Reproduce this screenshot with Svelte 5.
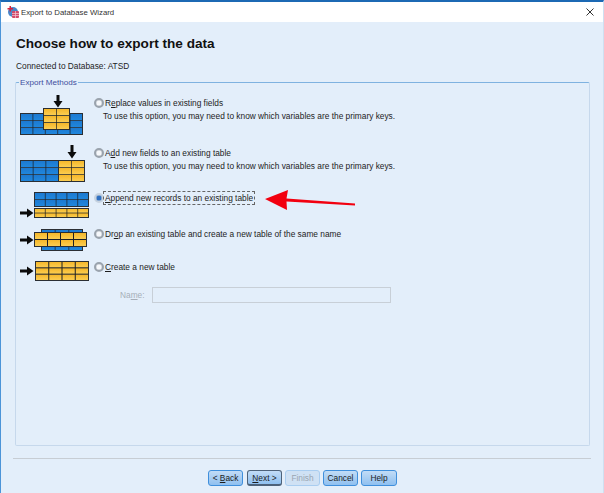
<script>
  const blue = 'url(#blueFill)';
  const gold = 'url(#goldFill)';
  const options = [
    { key: 'e', pre: 'R', post: 'place values in existing fields', desc: true, cls: 'r1', box: '20 95 72 50',
      tables: [{ x: 20.5, y: 113.5, w: 62, h: 21, c: 5, r: 3, f: blue }, { x: 43.5, y: 108.5, w: 26, h: 21, c: 2, r: 3, f: gold }],
      arrows: [{ d: 'v', x: 58, y: 94 }] },
    { key: 'd', pre: 'A', post: 'd new fields to an existing table', desc: true, cls: 'r2', box: '20 145 72 45',
      tables: [{ x: 20.5, y: 160.5, w: 38, h: 21, c: 3, r: 3, f: blue }, { x: 58.5, y: 160.5, w: 26, h: 21, c: 2, r: 3, f: gold }],
      arrows: [{ d: 'v', x: 72, y: 145 }] },
    { key: 'A', pre: '', post: 'ppend new records to an existing table', selected: true, cls: 'r3', box: '20 190 72 36',
      tables: [{ x: 34.5, y: 192.5, w: 54, h: 14, c: 5, r: 2, f: blue }, { x: 34.5, y: 208.5, w: 54, h: 9, c: 5, r: 2, f: gold }],
      arrows: [{ d: 'h', x: 20, y: 213 }] },
    { key: 'o', pre: 'Dr', post: 'p an existing table and create a new table of the same name', cls: 'r4', box: '20 226 72 33',
      tables: [{ x: 41.5, y: 229.5, w: 41, h: 21, c: 3, r: 3, f: blue }, { x: 34.5, y: 232.5, w: 52, h: 14, c: 4, r: 2, f: gold, heavy: true }],
      arrows: [{ d: 'h', x: 20, y: 240 }] },
    { key: 'C', pre: '', post: 'reate a new table', cls: 'r5', box: '20 259 72 25',
      tables: [{ x: 35.5, y: 261.5, w: 53, h: 19, c: 4, r: 3, f: gold, heavy: true }],
      arrows: [{ d: 'h', x: 20, y: 271 }] }
  ];
  const range = (n) => Array.from({ length: n }, (_, i) => i);
</script>

{#snippet table(t)}
  {#each range(t.r) as i}
    <rect x={t.x} y={t.y + (t.h * i) / t.r} width={t.w} height={t.h / t.r} fill={t.f} />
  {/each}
  {#each range(t.c - 1) as i}
    <line x1={t.x + (t.w * (i + 1)) / t.c} x2={t.x + (t.w * (i + 1)) / t.c} y1={t.y} y2={t.y + t.h} stroke="#1d2024" stroke-opacity={t.heavy ? 1 : 0.7} />
  {/each}
  {#each range(t.r - 1) as i}
    <line x1={t.x} x2={t.x + t.w} y1={t.y + (t.h * (i + 1)) / t.r} y2={t.y + (t.h * (i + 1)) / t.r} stroke="#1d2024" stroke-opacity={t.heavy ? 1 : 0.7} />
  {/each}
  <rect x={t.x} y={t.y} width={t.w} height={t.h} fill="none" stroke="#2a2e33" />
{/snippet}

{#snippet arrow(a)}
  {#if a.d === 'v'}
    <path d="M{a.x - 1.5} {a.y}h3v7h3l-4.500 6.500l-4.500 -6.500h3z" fill="#0b0b0b" />
  {:else}
    <path d="M{a.x} {a.y - 1.5}h7v-3l6.500 4.500l-6.500 4.500v-3h-7z" fill="#0b0b0b" />
  {/if}
{/snippet}

<div class="window">
  <header class="titlebar">
    <svg class="appicon" viewBox="0 0 12 12" width="12" height="12" aria-hidden="true">
      <circle cx="6" cy="6" r="5" fill="#4a86c8" />
      <rect x="5" y="5" width="7" height="7" rx="1" fill="#d24a6a" />
      <path d="M2.500 0h1.500v2h2v1.500h-2v2h-1.500v-2h-2v-1.500h2z" fill="#d8213a" />
      <path d="M5 7.500h7M5 9.500h7M8.500 5v7" stroke="#f4c6d2" stroke-width="0.700" />
    </svg>
    <span class="title">Export to Database Wizard</span>
    <svg class="close" viewBox="0 0 8 8" width="8" height="8" aria-hidden="true">
      <path d="M0.500 0.500l7 7M7.500 0.500l-7 7" stroke="#333" stroke-width="1" />
    </svg>
  </header>

  <main class="body">
    <h1>Choose how to export the data</h1>
    <p class="connected">Connected to Database: ATSD</p>

    <section class="group">
      <span class="legend">Export Methods</span>

      <div class="options">
        {#each options as o}
          <div class="row {o.cls}">
            <svg class="tbl" viewBox={o.box} width="72" aria-hidden="true">
              {#each o.tables as t}{@render table(t)}{/each}
              {#each o.arrows as a}{@render arrow(a)}{/each}
            </svg>
            <div class="choice">
              <div class="radioline">
                <span class="radio" class:on={o.selected}></span>
                <span class="label" class:focus={o.selected}>{o.pre}<u>{o.key}</u>{o.post}</span>
              </div>
              {#if o.desc}
                <p class="desc">To use this option, you may need to know which variables are the primary keys.</p>
              {/if}
            </div>
          </div>
        {/each}
      </div>

      <div class="namerow">
        <span class="namelabel">Na<u>m</u>e:</span>
        <span class="nameinput"></span>
      </div>

      <svg class="redarrow" viewBox="0 0 90 24" width="90" height="24" aria-hidden="true">
        <path d="M0 9L23 0L21.500 8.500L90 13.500L90 15.500L21.500 11.500L22 20z" fill="#f2000f" />
      </svg>
    </section>

    <hr />

    <footer class="buttons">
      <button class="w35">&lt; <u>B</u>ack</button>
      <button class="w35 default"><u>N</u>ext &gt;</button>
      <button class="w35" disabled>Finish</button>
      <button class="w35">Cancel</button>
      <button class="w36">Help</button>
    </footer>
  </main>
</div>

<svg class="defs" width="0" height="0" aria-hidden="true">
  <defs>
    <linearGradient id="blueFill" x1="0" y1="0" x2="0" y2="1">
      <stop offset="0" stop-color="#1d78cf" />
      <stop offset="1" stop-color="#2088de" />
    </linearGradient>
    <linearGradient id="goldFill" x1="0" y1="0" x2="0" y2="1">
      <stop offset="0" stop-color="#f5b526" />
      <stop offset="1" stop-color="#fbcf55" />
    </linearGradient>
  </defs>
</svg>

<style>
  :global(body) {
    margin: 0;
    background: #e3eefa;
  }
  .window {
    width: 604px;
    height: 493px;
    box-sizing: border-box;
    border-top: 2px solid #1c69b4;
    border-left: 1px solid #4b94d8;
    border-right: 1px solid #cfe0f1;
    display: flex;
    flex-direction: column;
    font-family: "Liberation Sans", Arial, sans-serif;
    font-size: 8.330px;
    color: #1d1d1d;
    overflow: hidden;
    position: relative;
  }
  .titlebar {
    height: 20px;
    flex: none;
    background: #fff;
    display: flex;
    align-items: center;
    padding: 0 6px 0 6px;
    gap: 2px;
  }
  .title {
    font-size: 7.800px;
    color: #333;
    flex: 1;
  }
  .close {
    margin-right: 3px;
  }
  .body {
    flex: 1;
    background: #e3eefa;
    padding: 0 12px 0 12px;
    display: flex;
    flex-direction: column;
    min-height: 0;
  }
  h1 {
    margin: 13px 0 0 3px;
    font-size: 13.600px;
    line-height: 18px;
    font-weight: 700;
    color: #111;
  }
  .connected {
    margin: 8px 0 0 3px;
    line-height: 11px;
  }
  .group {
    position: relative;
    margin: 10px 0 0 2px;
    height: 364px;
    width: 575px;
    box-sizing: border-box;
    border: 1px solid #c6d8ec;
    border-top-color: #7fb2e0;
    border-radius: 2px;
    padding-top: 12px;
    padding-left: 4px;
  }
  .legend {
    position: absolute;
    top: -6px;
    left: 3px;
    padding: 0 1px;
    background: #e3eefa;
    color: #3f4f9e;
    line-height: 11px;
    font-size: 8.100px;
  }
  .row {
    display: flex;
  }
  .tbl {
    flex: none;
    height: 100%;
    display: block;
  }
  .r1 { height: 50px; }
  .r2 { height: 45px; }
  .r3 { height: 36px; }
  .r4 { height: 33px; }
  .r5 { height: 25px; }
  .choice {
    margin-left: 2px;
    padding-top: 2px;
  }
  .radioline {
    display: flex;
    align-items: center;
    height: 12px;
  }
  .radio {
    width: 10px;
    height: 10px;
    box-sizing: border-box;
    border-radius: 50%;
    background: #f6f8fb;
    border: 2px solid #9aa3ad;
    box-shadow: inset 0 0 0 0.500px #c6ccd3;
    flex: none;
  }
  .radio.on {
    background: #2d6fc2;
    border-color: #c7d3e0;
  }
  .label {
    padding: 0 1px;
    line-height: 12px;
  }
  .label.focus {
    outline: 1px dashed #666;
    outline-offset: 0;
  }
  .desc {
    margin: 2px 0 0 9px;
    line-height: 11px;
  }
  .namerow {
    display: flex;
    align-items: center;
    margin-top: 3px;
    padding-left: 100px;
    gap: 8px;
  }
  .namelabel {
    color: #a6aeb8;
    width: 24px;
  }
  .nameinput {
    width: 237px;
    height: 14px;
    background: #e3eefa;
    border: 1px solid #c8cfd7;
    display: block;
  }
  .redarrow {
    position: absolute;
    left: 249px;
    top: 107px;
  }
  hr {
    border: 0;
    border-top: 1px solid #c7cdd4;
    margin: 12px 0 0 0;
    width: 578px;
  }
  .buttons {
    display: flex;
    gap: 3px;
    margin: 11px 0 0 195px;
  }
  button {
    height: 16px;
    box-sizing: border-box;
    border: 1px solid #3f8fdc;
    border-radius: 3px;
    background: linear-gradient(#c2dcf6, #8fc0f0);
    font: inherit;
    color: #1d1d1d;
    padding: 0;
  }
  .w35 { width: 35px; }
  .w36 { width: 36px; }
  .default {
    margin-left: 1px;
    border-color: #4d627a;
    border-width: 1px 1px 2px 1px;
  }
  button:disabled {
    background: #cfe1f4;
    border-color: #a9cdf0;
    color: #9aa5b1;
  }
  .defs {
    position: absolute;
  }
</style>
